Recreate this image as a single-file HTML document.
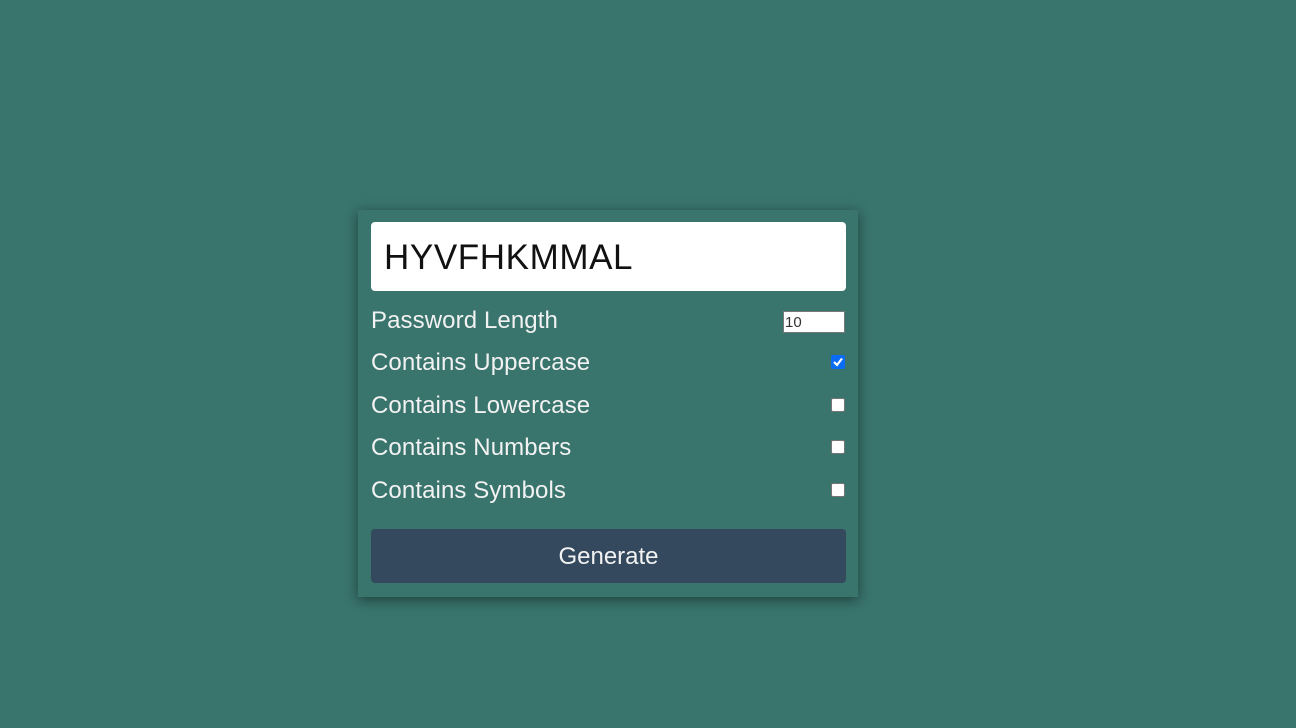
<!DOCTYPE html>
<html><head><style>
body{margin:0;width:1296px;height:728px;background:#39746d;font-family:"Liberation Sans",sans-serif;overflow:hidden;position:relative}
.card{position:absolute;left:358px;top:210px;width:500px;height:387px;background:#39746d;box-shadow:0 3px 12px rgba(0,0,0,0.45)}
.pw{position:absolute;left:13px;top:12px;width:475px;height:69px;background:#fff;border-radius:4px;font-size:35px;color:#111;line-height:72px;padding-left:13px;box-sizing:border-box;letter-spacing:0.6px}
.row{position:absolute;left:13px;width:475px;height:30px;color:#f2f2f2;font-size:24px;line-height:30px;letter-spacing:0.1px}
.cb{position:absolute;right:1px;top:7px;width:14px;height:14px;background:#fff;border:1px solid #767676;border-radius:2px;box-sizing:border-box}
.cb.on{background:#0a6cf5;border-color:#0a6cf5}
.num{position:absolute;left:425px;top:101px;width:62px;height:22px;background:#fff;border:1px solid #777;box-sizing:border-box;font-size:15px;color:#333;line-height:21px;padding-left:1px}
.btn{position:absolute;left:13px;top:319px;width:475px;height:54px;background:#34495e;border-radius:4px;color:#f2f2f2;font-size:24px;text-align:center;line-height:56px}
</style></head><body>
<div class="card">
<div class="pw">HYVFHKMMAL</div>
<div class="row" style="top:96px">Password Length</div>
<div class="num">10</div>
<div class="row" style="top:138px">Contains Uppercase<div class="cb on"><svg width="14" height="14" viewBox="0 0 14 14" style="position:absolute;left:-1px;top:-1px"><path d="M3 7 L6 10 L11 3.5" stroke="#fff" stroke-width="2.2" fill="none"/></svg></div></div>
<div class="row" style="top:181px">Contains Lowercase<div class="cb"></div></div>
<div class="row" style="top:223px">Contains Numbers<div class="cb"></div></div>
<div class="row" style="top:266px">Contains Symbols<div class="cb"></div></div>
<div class="btn">Generate</div>
</div>
</body></html>
